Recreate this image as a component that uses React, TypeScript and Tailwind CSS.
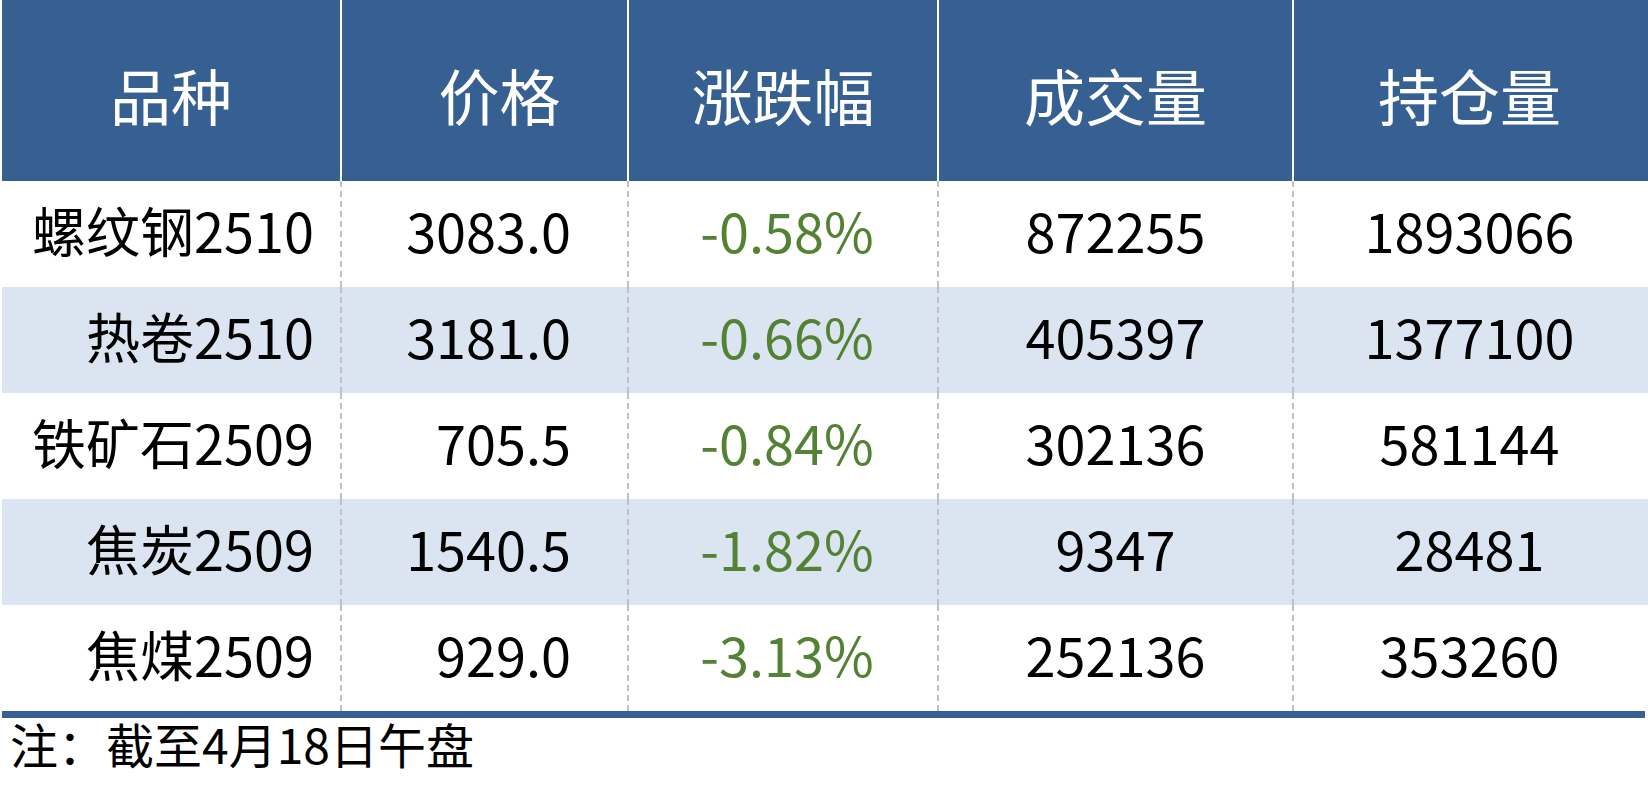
const rows = [
  { name: "螺纹钢2510", price: "3083.0", chg: "-0.58%", vol: "872255", oi: "1893066" },
  { name: "热卷2510", price: "3181.0", chg: "-0.66%", vol: "405397", oi: "1377100" },
  { name: "铁矿石2509", price: "705.5", chg: "-0.84%", vol: "302136", oi: "581144" },
  { name: "焦炭2509", price: "1540.5", chg: "-1.82%", vol: "9347", oi: "28481" },
  { name: "焦煤2509", price: "929.0", chg: "-3.13%", vol: "252136", oi: "353260" },
];

const cols = "grid grid-cols-[338px_287px_310px_355px_353px]";

export default function App() {
  return (
    <div className="w-[1648px] h-[791px] bg-white pl-[2px] overflow-hidden font-['Noto_Sans_CJK_SC',sans-serif]">
      {/* 表头 */}
      <div className={`${cols} h-[181px] bg-[#376092] text-white text-[61px] leading-none`}>
        <div className="flex items-center justify-center pt-[8px]">品种</div>
        <div className="flex items-center justify-center pt-[8px] pl-[30px] border-l-2 border-white">价格</div>
        <div className="flex items-center justify-center pt-[8px] border-l-2 border-white">涨跌幅</div>
        <div className="flex items-center justify-center pt-[8px] border-l-2 border-white">成交量</div>
        <div className="flex items-center justify-center pt-[8px] border-l-2 border-white">持仓量</div>
      </div>

      {rows.map((r, i) => (
        <div
          key={r.name}
          className={`${cols} h-[106px] text-[54px] leading-none text-black ${i % 2 === 1 ? "bg-[#dbe5f1]" : "bg-white"}`}
        >
          <div className="flex items-center justify-end pr-[26px] pb-[8px]">{r.name}</div>
          <div className="flex items-center justify-end pr-[56px] pb-[8px] border-l-2 border-dashed border-[#c0c0c0]">{r.price}</div>
          <div className="flex items-center justify-center pl-[8px] pb-[8px] text-[#548235] border-l-2 border-dashed border-[#c0c0c0]">{r.chg}</div>
          <div className="flex items-center justify-center pb-[8px] border-l-2 border-dashed border-[#c0c0c0]">{r.vol}</div>
          <div className="flex items-center justify-center pb-[8px] border-l-2 border-dashed border-[#c0c0c0]">{r.oi}</div>
        </div>
      ))}

      <div className="w-[1643px] h-[7px] bg-[#376092]" />

      <div className="pl-[8px] pt-[1px] text-[48px] leading-none text-black">注：截至4月18日午盘</div>
    </div>
  );
}
